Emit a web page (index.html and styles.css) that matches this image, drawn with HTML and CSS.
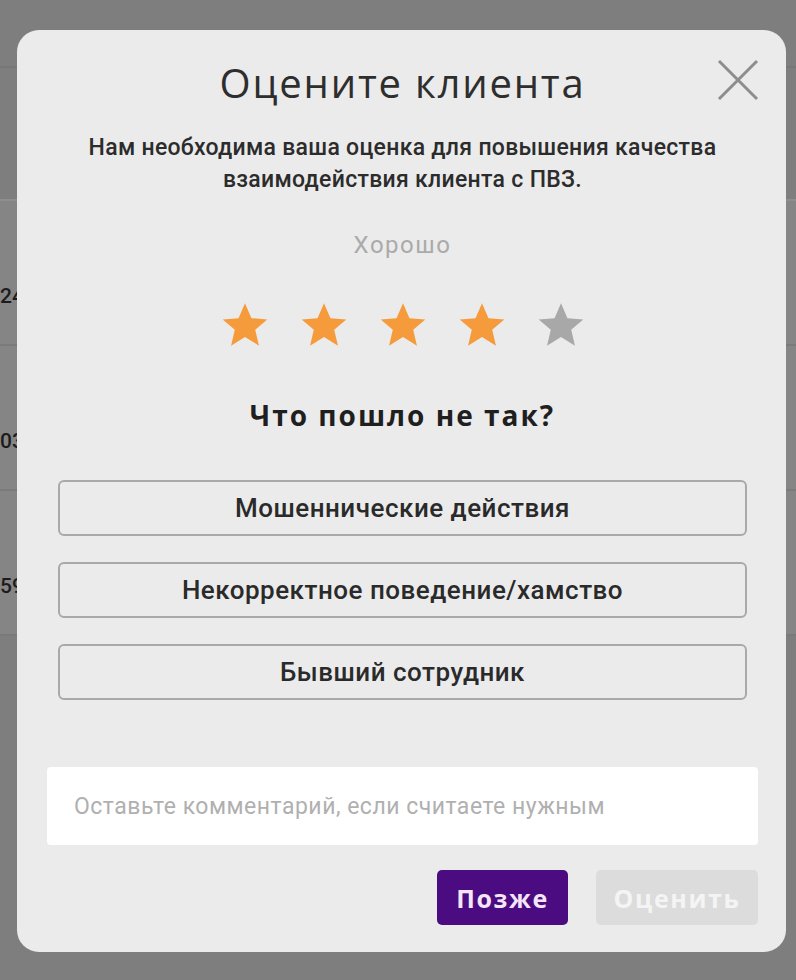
FILE: index.html
```
<!DOCTYPE html>
<html lang="ru">
<head>
    <meta charset="UTF-8">
    <meta name="viewport" content="width=device-width, initial-scale=1.0">
    <title>Оцените клиента</title>
    <link rel="stylesheet" href="styles.css">
</head>
<body>
    <div class="backdrop">
        <div class="page-head"></div>
        <div class="page-sub"></div>
        <div class="table-row"><span class="cell">24</span></div>
        <div class="table-row"><span class="cell">03</span></div>
        <div class="table-row"><span class="cell">59</span></div>
    </div>

    <div class="modal">
        <div class="modal-head">
            <h1>Оцените клиента</h1>
            <button class="close-btn" aria-label="Закрыть">
                <svg width="44" height="44" viewBox="0 0 44 44">
                    <path d="M3 3 L41 41 M41 3 L3 41" stroke="#8d8d8d" stroke-width="3" fill="none"/>
                </svg>
            </button>
        </div>

        <p class="subtitle">Нам необходима ваша оценка для повышения качества<br>взаимодействия клиента с ПВЗ.</p>

        <div class="rating-label">Хорошо</div>

        <div class="stars">
            <svg class="star on" viewBox="0 0 24 24"><path d="M12 1.5l3.1 7.2 7.6.6-5.8 5 1.8 7.6L12 17.8l-6.7 4.1 1.8-7.6-5.8-5 7.6-.6z"/></svg>
            <svg class="star on" viewBox="0 0 24 24"><path d="M12 1.5l3.1 7.2 7.6.6-5.8 5 1.8 7.6L12 17.8l-6.7 4.1 1.8-7.6-5.8-5 7.6-.6z"/></svg>
            <svg class="star on" viewBox="0 0 24 24"><path d="M12 1.5l3.1 7.2 7.6.6-5.8 5 1.8 7.6L12 17.8l-6.7 4.1 1.8-7.6-5.8-5 7.6-.6z"/></svg>
            <svg class="star on" viewBox="0 0 24 24"><path d="M12 1.5l3.1 7.2 7.6.6-5.8 5 1.8 7.6L12 17.8l-6.7 4.1 1.8-7.6-5.8-5 7.6-.6z"/></svg>
            <svg class="star" viewBox="0 0 24 24"><path d="M12 1.5l3.1 7.2 7.6.6-5.8 5 1.8 7.6L12 17.8l-6.7 4.1 1.8-7.6-5.8-5 7.6-.6z"/></svg>
        </div>

        <h2 class="question">Что пошло не так?</h2>

        <div class="reasons">
            <button class="reason">Мошеннические действия</button>
            <button class="reason">Некорректное поведение/хамство</button>
            <button class="reason">Бывший сотрудник</button>
        </div>

        <input class="comment" type="text" placeholder="Оставьте комментарий, если считаете нужным">

        <div class="actions">
            <button class="btn btn-later">Позже</button>
            <button class="btn btn-rate" disabled>Оценить</button>
        </div>
    </div>
</body>
</html>
```

FILE: styles.css
```
/* General Reset */
* {
    margin: 0;
    padding: 0;
    box-sizing: border-box;
}

body {
    font-family: Roboto, "Liberation Sans", sans-serif;
    background-color: #7e7e7e;
    color: #333;
    height: 980px;
    overflow: hidden;
}

/* page behind the overlay */
.backdrop {
    display: flex;
    flex-direction: column;
}

.page-head {
    height: 68px;
    border-bottom: 2px solid #777;
}

.page-sub {
    height: 133px;
    border-bottom: 2px solid #8e8e8e;
}

.table-row {
    height: 145px;
    padding-top: 84px;
    background-color: #858585;
    border-bottom: 2px solid #7a7a7a;
}

.table-row .cell {
    display: block;
    font-size: 21px;
    line-height: 22px;
    font-weight: 500;
    color: #1c1c1c;
}

/* modal */
.modal {
    position: absolute;
    left: 17px;
    top: 30px;
    width: 769px;
    height: 922px;
    background-color: #ebebeb;
    border-radius: 22px;
    padding: 31px 28px 27px 30px;
    display: flex;
    flex-direction: column;
    align-items: center;
}

.modal-head {
    position: relative;
    width: 100%;
    text-align: center;
}

h1 {
    font-family: "Open Sans", sans-serif;
    font-weight: 400;
    font-size: 40px;
    line-height: 44px;
    letter-spacing: 1.8px;
    color: #2e2e2e;
}

.close-btn {
    position: absolute;
    right: -2px;
    top: -3px;
    background: none;
    border: none;
    cursor: pointer;
}

.subtitle {
    margin-top: 27px;
    font-size: 23px;
    font-weight: 500;
    line-height: 32px;
    letter-spacing: 0.3px;
    text-align: center;
    color: #2c2c2c;
}

.rating-label {
    margin-top: 34px;
    font-size: 24px;
    line-height: 30px;
    letter-spacing: 1.5px;
    color: #aaa;
}

.stars {
    margin-top: 40px;
    display: flex;
    gap: 29px;
}

.star {
    width: 50px;
    height: 50px;
    fill: #a8a8a8;
}

.star.on {
    fill: #f59b3b;
}

.question {
    margin-top: 49px;
    font-family: "Open Sans", sans-serif;
    font-size: 28px;
    font-weight: 700;
    line-height: 32px;
    letter-spacing: 2px;
    color: #1f1f1f;
}

.reasons {
    margin-top: 49px;
    width: 100%;
    padding: 0 11px;
    display: flex;
    flex-direction: column;
    gap: 26px;
}

.reason {
    height: 56px;
    background-color: #ebebeb;
    border: 2px solid #a9a9a9;
    border-radius: 6px;
    font-family: Roboto, sans-serif;
    font-size: 26px;
    font-weight: 500;
    letter-spacing: 0.5px;
    color: #2a2a2a;
    cursor: pointer;
}

.comment {
    margin-top: 67px;
    width: 100%;
    height: 78px;
    border: none;
    border-radius: 4px;
    background-color: #fff;
    padding: 0 27px;
    font-family: Roboto, sans-serif;
    font-size: 23px;
    letter-spacing: 0.5px;
    outline: none;
}

.comment::placeholder {
    color: #b0b0b0;
}

.actions {
    margin-top: 25px;
    width: 100%;
    display: flex;
    justify-content: flex-end;
    gap: 28px;
}

.btn {
    height: 55px;
    border: none;
    border-radius: 5px;
    font-family: "Open Sans", sans-serif;
    font-size: 25px;
    font-weight: 700;
    letter-spacing: 1.6px;
    cursor: pointer;
}

.btn-later {
    width: 131px;
    background-color: #4a0c80;
    color: #f4e6f8;
}

.btn-rate {
    width: 162px;
    background-color: #dcdcdc;
    color: #f4f4f4;
    cursor: default;
}
```
